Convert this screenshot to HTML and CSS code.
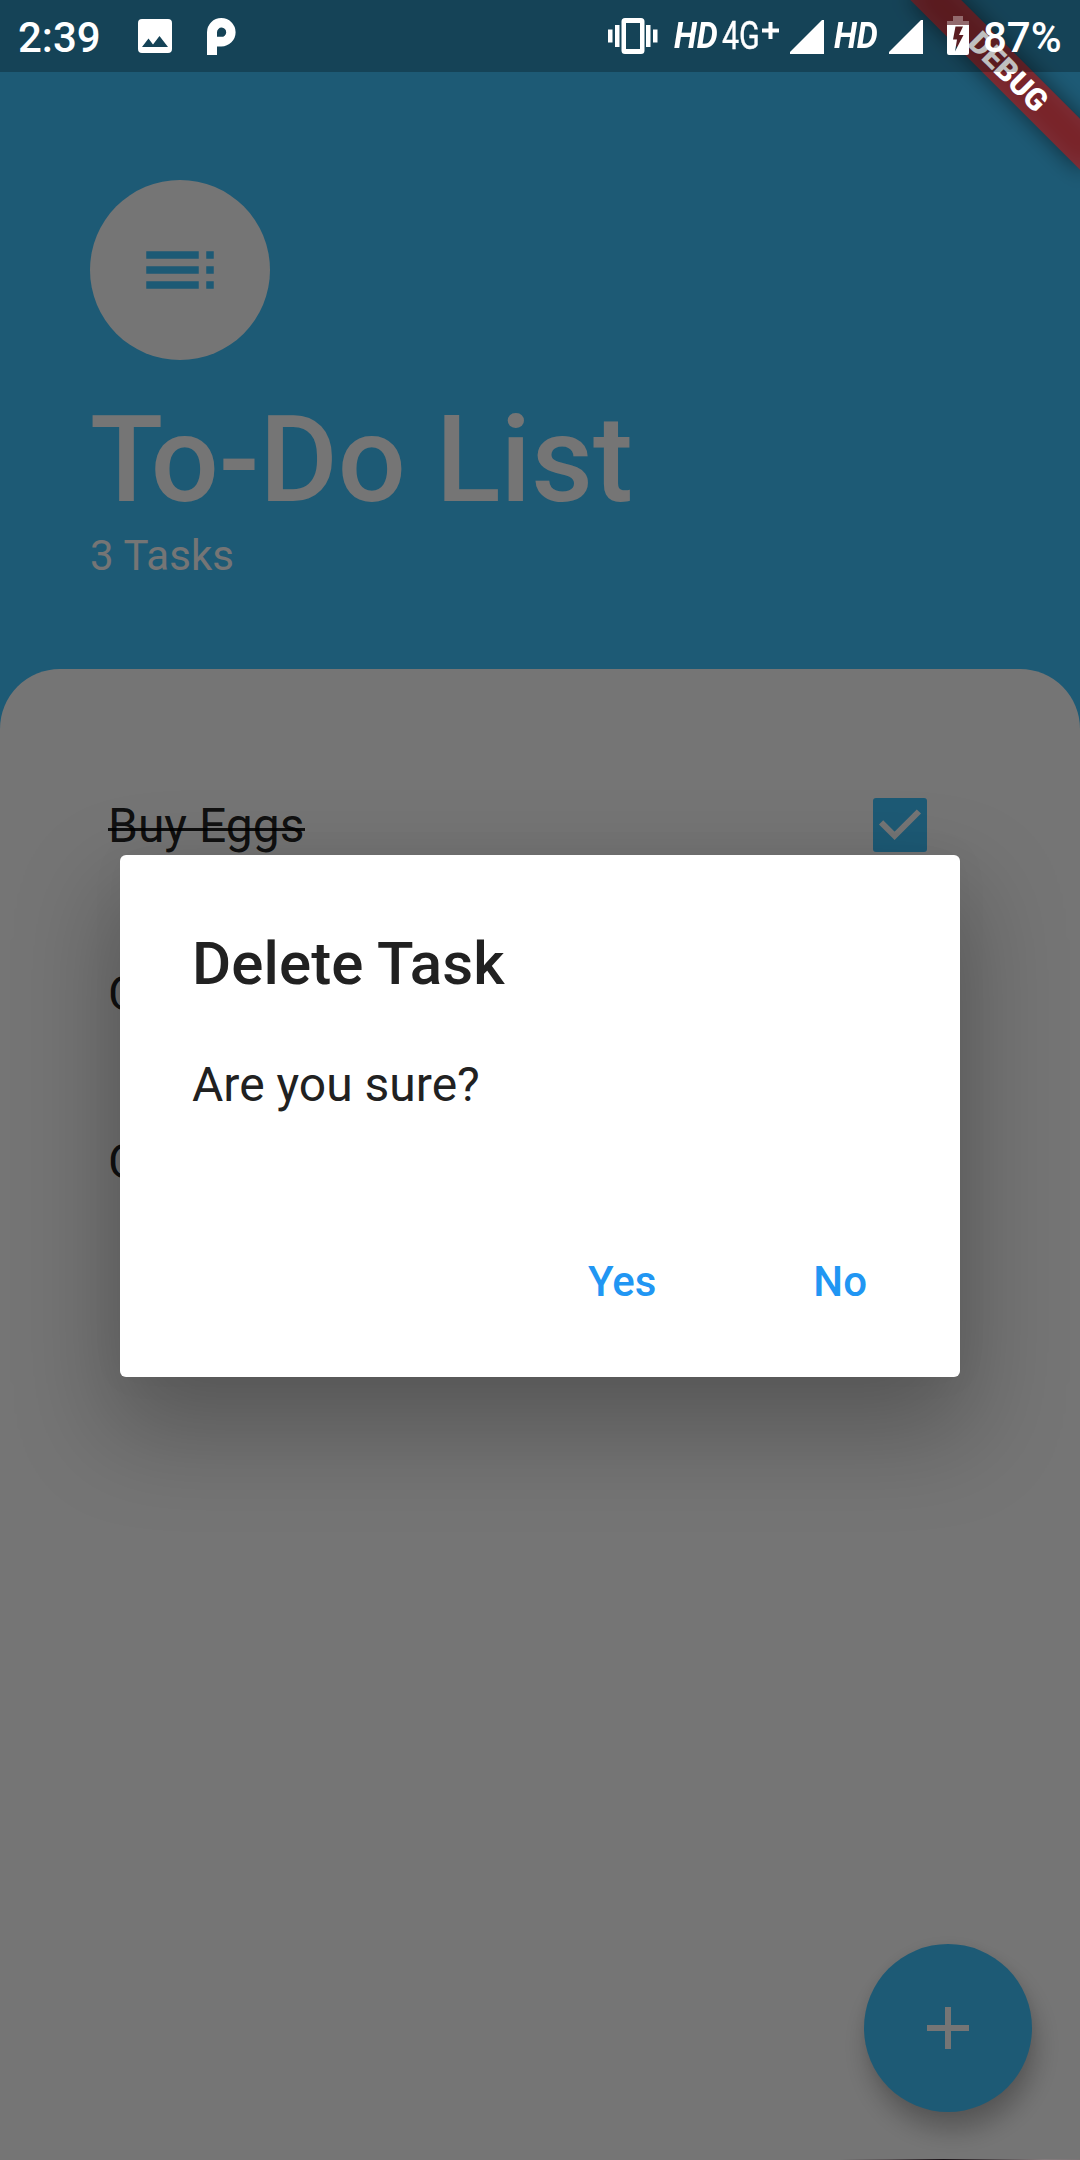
FILE: index.html
```html
<!DOCTYPE html>
<html lang="en">
<head>
<meta charset="utf-8">
<title>To-Do List</title>
<link rel="stylesheet" href="styles.css">
</head>
<body>
<div class="screen">
  <main class="app">
    <header class="header">
      <div class="avatar">
        <svg width="90" height="90" viewBox="0 0 24 24"><path fill="#40c4ff" d="M3 9h14V7H3v2zm0 4h14v-2H3v2zm0 4h14v-2H3v2zm16 0h2v-2h-2v2zm0-10v2h2V7h-2zm0 6h2v-2h-2v2z"/></svg>
      </div>
      <h1 class="heading"><span class="initial">T</span>o-Do List</h1>
      <p class="count">3 Tasks</p>
    </header>
    <section class="panel">
      <div class="task">
        <span class="done">Buy Eggs</span>
        <svg class="check" width="54" height="54" viewBox="0 0 54 54"><rect width="54" height="54" rx="3" fill="#40c4ff"/><path d="M8.1 24.3 21.6 37.8 45.9 13.5" fill="none" stroke="#fff" stroke-width="6"/></svg>
      </div>
      <div class="task"><span>C</span></div>
      <div class="task"><span>C</span></div>
    </section>
  </main>
  <div class="fab">
    <svg width="72" height="72" viewBox="0 0 24 24"><path fill="#fff" d="M19 13h-6v6h-2v-6H5v-2h6V5h2v6h6v2z"/></svg>
  </div>
  <div class="barrier">
    <div class="dialog">
      <h2 class="dialog-title">Delete Task</h2>
      <p class="dialog-text">Are you sure?</p>
      <div class="actions">
        <span class="action">Yes</span>
        <span class="action">No</span>
      </div>
    </div>
  </div>
  <div class="edge"></div>
  <div class="banner"><span>DEBUG</span></div>
  <div class="status">
    <span class="time">2:39</span>
    <svg class="picture" width="34" height="34" viewBox="0 0 34 34"><path fill="#fff" fill-rule="evenodd" d="M4 0h26a4 4 0 0 1 4 4v26a4 4 0 0 1-4 4H4a4 4 0 0 1-4-4V4a4 4 0 0 1 4-4zM4 28h26L21.500 17 15 25.500 10.500 19.500z"/></svg>
    <svg class="pmark" width="29" height="37" viewBox="0 0 29 37"><path fill="#fff" fill-rule="evenodd" d="M0 37V14.200A14.300 14.200 0 0 1 14.300 0A14.300 14.200 0 0 1 28.600 14.200A14.300 14.200 0 0 1 14.300 28.400H10V37zM10 18.800h4.300a4.600 4.600 0 1 0-4.300-4.600z"/></svg>
    <svg class="vibrate" width="50" height="36" viewBox="0 0 50 36"><g fill="#fff"><path d="M0 11.500h4.500v13H0zM7 7h4.500v22H7zM38 7h4.500v22H38zM45 11.500h4.500v13H45z"/><path fill-rule="evenodd" d="M17 0h16a3.500 3.500 0 0 1 3.500 3.500v29A3.500 3.500 0 0 1 33 36H17a3.500 3.500 0 0 1-3.500-3.500v-29A3.500 3.500 0 0 1 17 0zM18 5v26h14V5z"/></g></svg>
    <span class="hd hd-first">HD</span>
    <span class="net">4G</span>
    <svg class="plus" width="17" height="17" viewBox="0 0 17 17"><path stroke="#fff" stroke-width="4" d="M8.500 0v17M0 8.500h17"/></svg>
    <svg class="signal" width="34" height="34" viewBox="0 0 34 34"><path fill="#fff" d="M0 34v-2L32 0h2v34z"/></svg>
    <span class="hd hd-second">HD</span>
    <svg class="signal signal-second" width="34" height="34" viewBox="0 0 34 34"><path fill="#fff" d="M0 34v-2L32 0h2v34z"/></svg>
    <svg class="battery" width="22" height="39" viewBox="0 0 22 39"><path fill="#fff" fill-opacity=".35" d="M6 0h10v5h6v4H0V5h6z"/><path fill="#fff" fill-rule="evenodd" d="M0 9h22v28a2 2 0 0 1-2 2H2a2 2 0 0 1-2-2zM8.500 10.500 6 23.500h4L8 35.500l8.500-16.500h-4.500l4-8.500z"/></svg>
    <span class="percent">87%</span>
  </div>
</div>
</body>
</html>
```
FILE: styles.css
```css
* { box-sizing: border-box; }
body { margin: 0; font-family: Roboto, "Liberation Sans", sans-serif; }
h1, h2, p { margin: 0; }
svg { display: block; flex: none; }
.screen { position: relative; width: 1080px; height: 2160px; overflow: hidden; }
.app { display: flex; flex-direction: column; height: 100%; background: #40c4ff; }
.header { height: 669px; padding: 180px 90px 0; color: #fff; }
.avatar { display: flex; align-items: center; justify-content: center; width: 180px; height: 180px; margin-bottom: 30px; border-radius: 50%; background: #fff; }
.heading { font-size: 120px; font-weight: 500; line-height: 141px; white-space: nowrap; }
.initial { display: inline-block; letter-spacing: -12.5px; }
.count { font-size: 42px; line-height: 49px; letter-spacing: .1px; }
.panel { flex: 1; padding: 72px 108px 0; background: #fff; border-radius: 60px 60px 0 0; }
.task { display: flex; align-items: center; justify-content: space-between; height: 168px; padding-right: 45px; font-size: 48px; color: rgba(0, 0, 0, .87); }
.done { position: relative; }
.done::after { content: ""; position: absolute; left: 0; right: 0; top: 31px; height: 3px; background: rgba(0, 0, 0, .87); }
.fab { position: absolute; left: 864px; top: 1944px; display: flex; align-items: center; justify-content: center; width: 168px; height: 168px; border-radius: 50%; background: #40c4ff; box-shadow: 4px 18px 26px 0 rgba(0, 0, 0, .26), 0 0 12px rgba(0, 0, 0, .05); }
.barrier { position: absolute; inset: 0; display: flex; align-items: center; justify-content: center; padding-top: 72px; background: rgba(0, 0, 0, .54); }
.dialog { width: 840px; height: 522px; padding: 74px 72px 0; background: #fff; border-radius: 6px; color: #212121; box-shadow: 0 45px 96px 10px rgba(0, 0, 0, .25), 0 0 36px rgba(0, 0, 0, .04); }
.dialog-title { font-size: 60px; font-weight: 500; line-height: 70px; letter-spacing: .1px; margin-bottom: 58px; }
.dialog-text { font-size: 48px; line-height: 56px; }
.actions { display: flex; justify-content: flex-end; gap: 157px; margin-top: 144px; padding-right: 21px; }
.action { font-size: 42px; font-weight: 500; line-height: 49px; color: #2196f3; }
.edge { position: absolute; left: 840px; right: 0; bottom: 0; height: 1px; background: linear-gradient(90deg, #757575 0, #5c5658 20%, #1b1418 43%, #5c5658 68%, #857c7e 85%, #7b7577 100%); }
.banner { position: absolute; left: 960px; top: 84px; width: 240px; height: 36px; transform-origin: 120px -84px; transform: rotate(45deg); text-align: center; color: #fff; font-size: 30.6px; font-weight: 900; line-height: 36px; }
.banner::before { content: ""; position: absolute; inset: 0; background: rgba(0, 0, 0, .5); filter: blur(11px); }
.banner span { position: absolute; inset: 0; background: rgba(183, 28, 28, .627); }
.status { position: absolute; left: 0; top: 0; display: flex; align-items: flex-start; width: 1080px; height: 72px; padding-left: 18px; background: rgba(0, 0, 0, .25); color: #fff; white-space: nowrap; }
.time, .percent { font-size: 42px; font-weight: 500; line-height: 49px; margin-top: 13px; }
.time { width: 120px; }
.picture { margin-top: 19px; }
.pmark { margin: 18px 0 0 35px; }
.vibrate { margin: 18px 0 0 372px; }
.hd { width: 43px; margin-top: 15px; font-size: 37px; font-weight: 700; font-style: italic; line-height: 42px; }
.hd, .net { display: block; transform-origin: left; transform: scaleX(.9); }
.hd-first { margin-left: 16px; }
.net { width: 37px; margin: 13px 0 0 5px; font-size: 39px; line-height: 46px; transform: scaleX(.78); -webkit-text-stroke: .4px #fff; }
.plus { margin: 22px 0 0 3px; }
.signal { margin: 20px 0 0 11px; }
.hd-second { margin-left: 10px; }
.signal-second { margin-left: 12px; }
.battery { margin: 16px 0 0 24px; }
.percent { margin-left: 14px; }
```
